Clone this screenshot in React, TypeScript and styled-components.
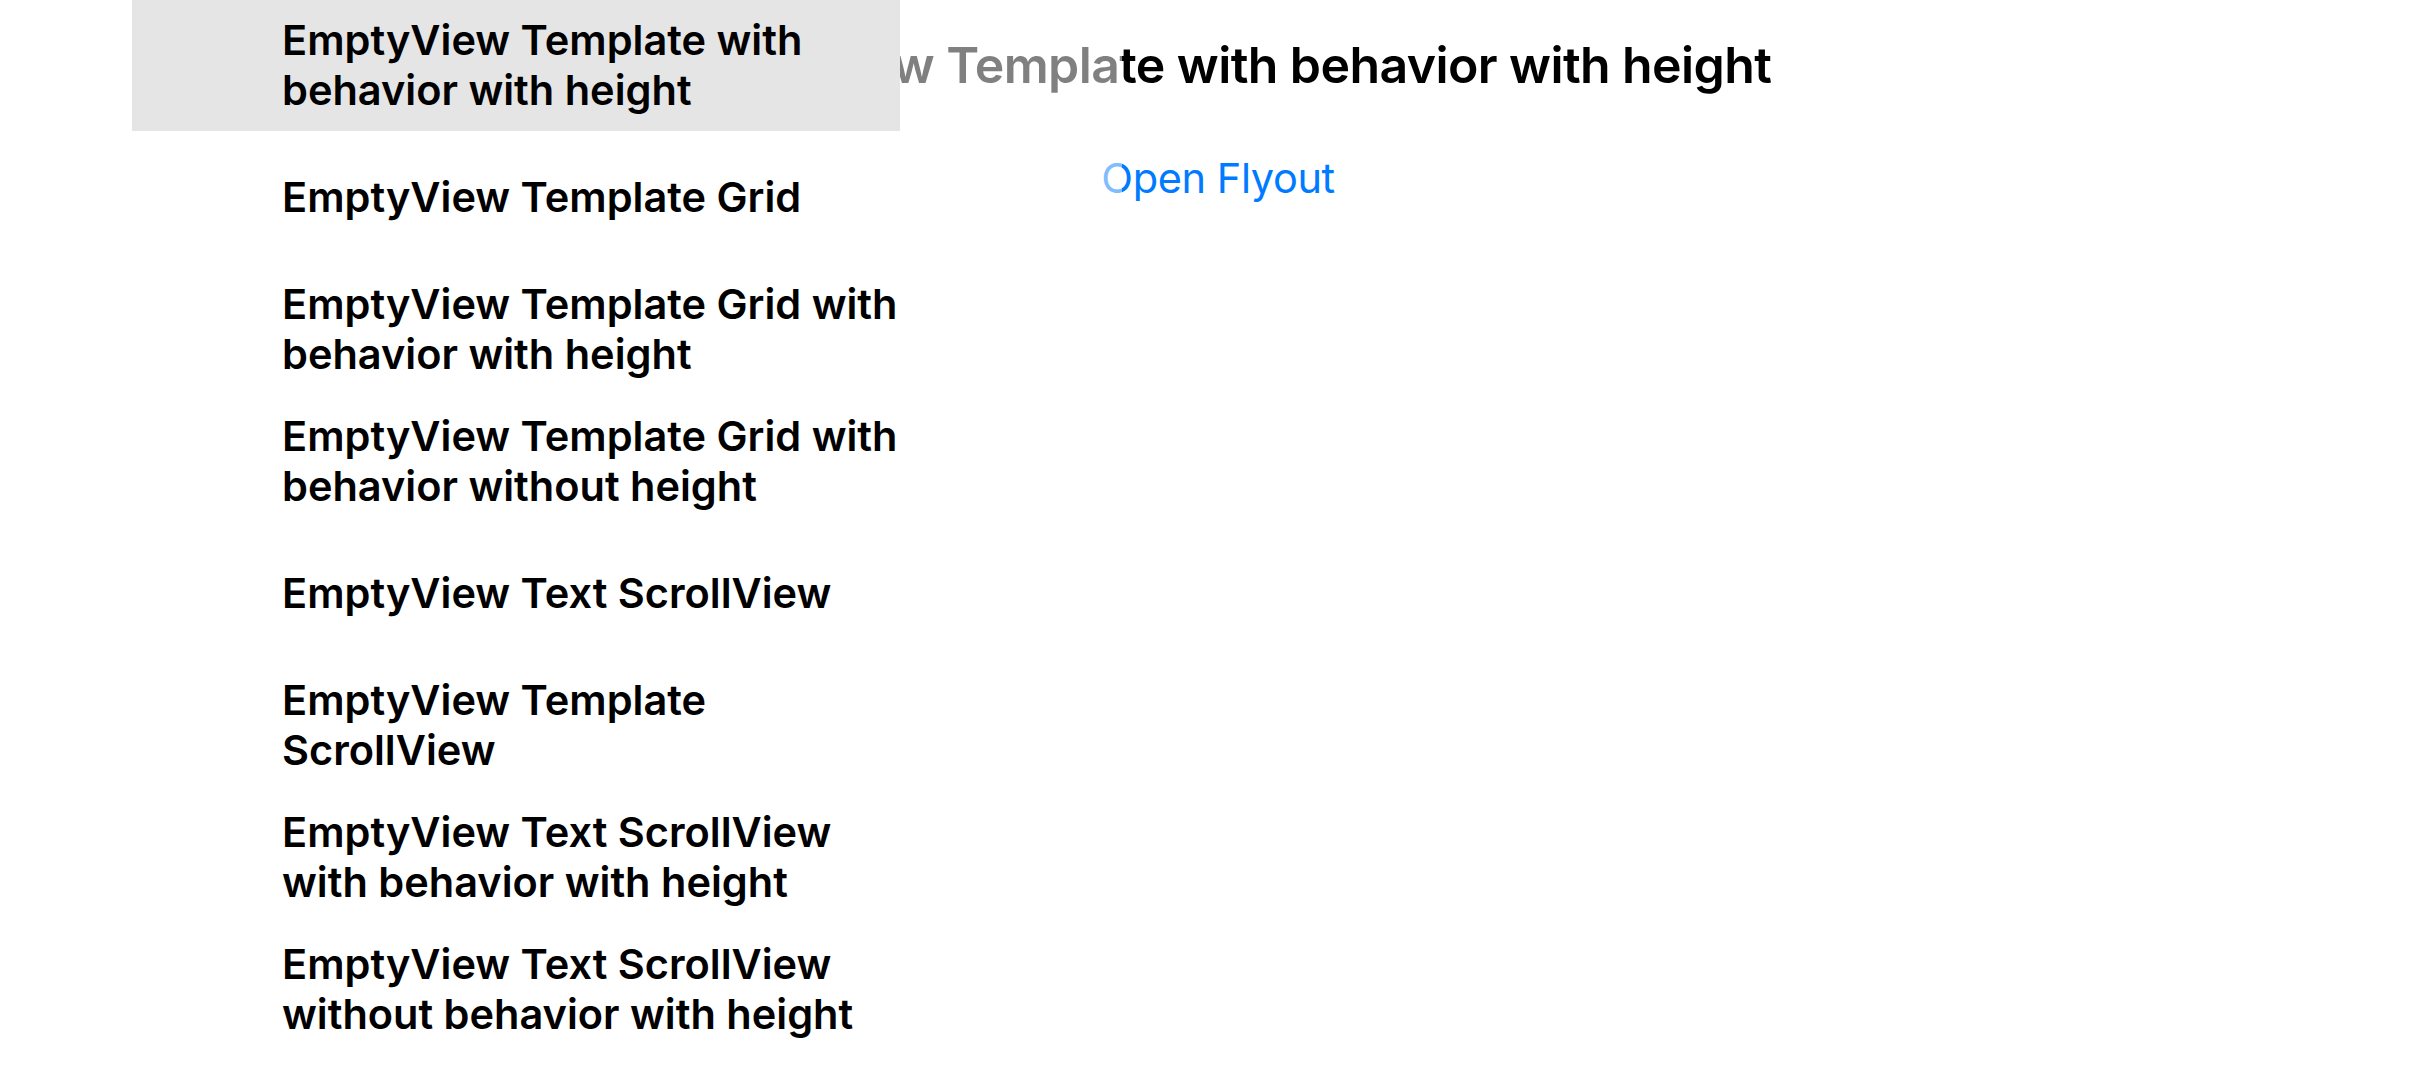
import React from "react";
import styled, { createGlobalStyle } from "styled-components";

const GlobalStyle = createGlobalStyle`
  html, body {
    margin: 0;
    padding: 0;
    background: #ffffff;
    overflow: hidden;
  }
  body {
    font-family: Inter, "Noto Sans", "Liberation Sans", sans-serif;
    -webkit-font-smoothing: antialiased;
  }
`;

const Screen = styled.div`
  position: relative;
  width: 2436px;
  height: 1084px;
  overflow: hidden;
  background: #ffffff;
`;

const Detail = styled.main`
  display: flex;
  flex-direction: column;
  align-items: center;
  padding-top: 35px;
  width: 100%;
  height: 100%;
  box-sizing: border-box;
`;

const Title = styled.h1`
  margin: 0;
  font-family: Inter, "Liberation Sans", sans-serif;
  font-weight: 600;
  font-size: 50px;
  line-height: 60px;
  letter-spacing: -0.6px;
  color: #000000;
  white-space: nowrap;
`;

const FlyoutButton = styled.button`
  margin-top: 58px;
  padding: 0;
  border: none;
  background: transparent;
  font-family: Inter, "Liberation Sans", sans-serif;
  font-weight: 400;
  font-size: 41.5px;
  line-height: 50px;
  letter-spacing: -0.4px;
  color: #007aff;
  cursor: pointer;
`;

const Scrim = styled.div`
  position: absolute;
  top: 0;
  left: 900px;
  width: 222px;
  height: 100%;
  background: rgba(255, 255, 255, 0.5);
`;

const Flyout = styled.nav`
  position: absolute;
  top: 0;
  left: 0;
  width: 900px;
  height: 100%;
  background: #ffffff;
  padding-left: 132px;
  box-sizing: border-box;
  overflow: hidden;
`;

const MenuList = styled.ul`
  list-style: none;
  margin: -1px 0 0 0;
  padding: 0;
  display: flex;
  flex-direction: column;
`;

const MenuItem = styled.li<{ $selected?: boolean }>`
  height: 132px;
  display: flex;
  flex-direction: column;
  justify-content: center;
  padding-left: 150px;
  background: ${(p) => (p.$selected ? "#e5e5e5" : "transparent")};
  font-family: Inter, "Liberation Sans", sans-serif;
  font-weight: 600;
  font-size: 41.5px;
  line-height: 50px;
  letter-spacing: 0px;
  color: #000000;
`;

const ItemLine = styled.span`
  display: block;
  white-space: nowrap;
`;

const items: string[][] = [
  ["EmptyView Template with", "behavior with height"],
  ["EmptyView Template Grid"],
  ["EmptyView Template Grid with", "behavior with height"],
  ["EmptyView Template Grid with", "behavior without height"],
  ["EmptyView Text ScrollView"],
  ["EmptyView Template", "ScrollView"],
  ["EmptyView Text ScrollView", "with behavior with height"],
  ["EmptyView Text ScrollView", "without behavior with height"],
];

export default function App() {
  return (
    <>
      <GlobalStyle />
      <Screen>
        <Detail>
          <Title>EmptyView Template with behavior with height</Title>
          <FlyoutButton>Open Flyout</FlyoutButton>
        </Detail>
        <Scrim />
        <Flyout>
          <MenuList>
            {items.map((lines, i) => (
              <MenuItem key={i} $selected={i === 0}>
                {lines.map((l, j) => (
                  <ItemLine key={j}>{l}</ItemLine>
                ))}
              </MenuItem>
            ))}
          </MenuList>
        </Flyout>
      </Screen>
    </>
  );
}
